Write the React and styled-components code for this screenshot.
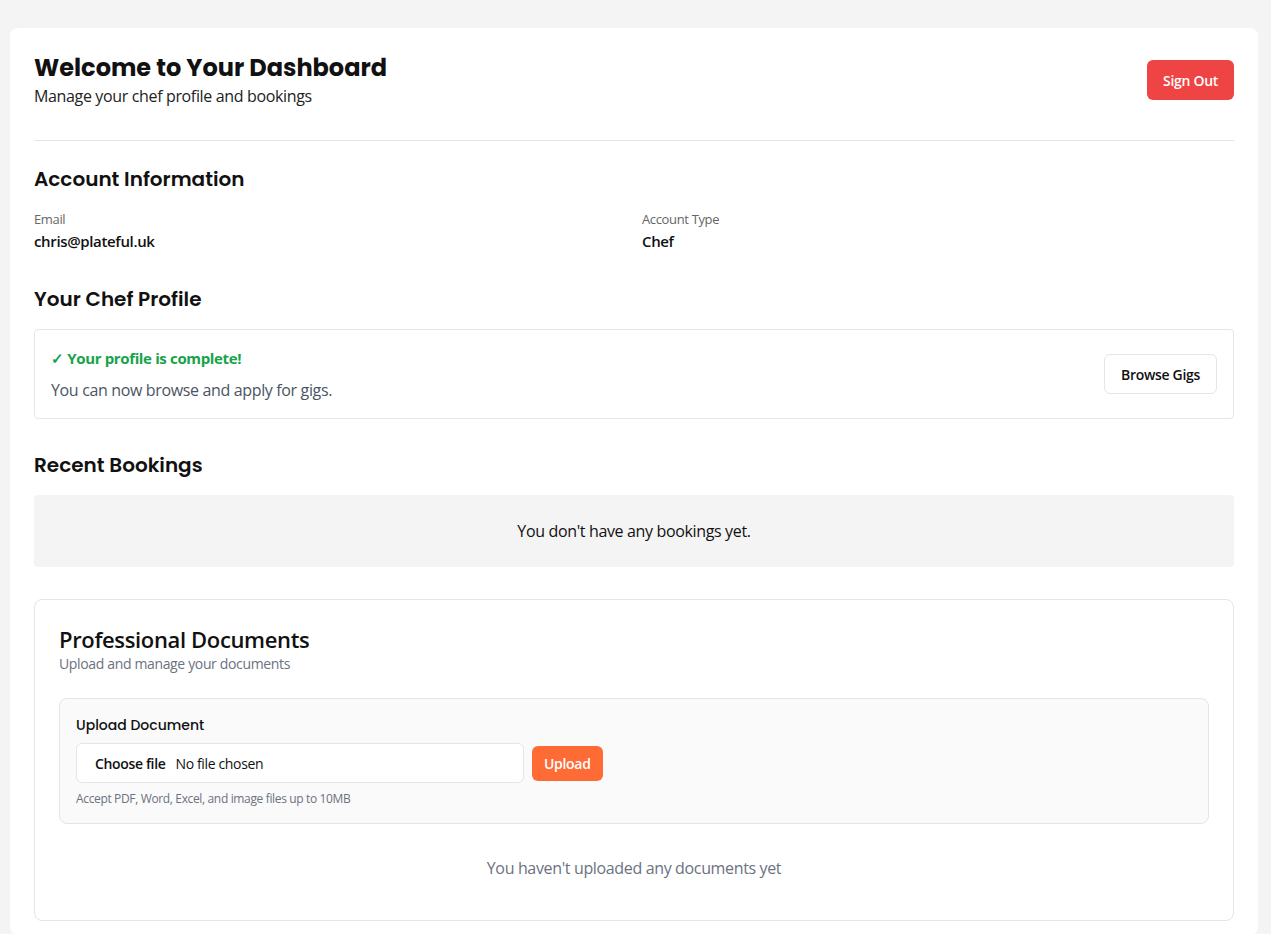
import React from "react";
import styled, { createGlobalStyle } from "styled-components";

const GlobalStyle = createGlobalStyle`
  * { box-sizing: border-box; }
  body {
    margin: 0;
    background: #f4f4f4;
    font-family: "Segoe UI", "Open Sans", sans-serif;
    letter-spacing: -0.022em;
    color: #111;
  }
`;

const heading = `"Poppins", Inter, sans-serif`;

const Page = styled.div`
  padding: 28px 13px 0 10px;
`;

const Card = styled.div`
  background: #fff;
  border-radius: 8px;
  padding: 24px 24px 14px;
`;

const Header = styled.div`
  display: flex;
  align-items: center;
  justify-content: space-between;
  padding-bottom: 32px;
  border-bottom: 1px solid #e5e5e5;
`;

const Title = styled.h1`
  margin: 0;
  font-family: ${heading};
  letter-spacing: 0;
  font-size: 24px;
  line-height: 32px;
  font-weight: 700;
  color: #111;
`;

const Subtitle = styled.p`
  margin: 0;
  font-size: 16px;
  line-height: 24px;
  color: #222;
`;

const Button = styled.button`
  font-family: "Segoe UI", "Open Sans", sans-serif;
  letter-spacing: -0.022em;
  font-size: 14px;
  font-weight: 600;
  border-radius: 6px;
  cursor: pointer;
  height: ${(p) => p.$h || 40}px;
  padding: 0 ${(p) => p.$px || 16}px;
  background: ${(p) => p.$bg || "#fff"};
  color: ${(p) => p.$color || "#111"};
  border: 1px solid ${(p) => p.$border || "transparent"};
`;

const SectionTitle = styled.h2`
  margin: ${(p) => p.$mt || 32}px 0 16px;
  font-family: ${heading};
  letter-spacing: 0;
  font-size: 20px;
  line-height: 28px;
  font-weight: 600;
  color: #111;
`;

const InfoGrid = styled.div`
  display: grid;
  grid-template-columns: 1fr 1fr;
  gap: 16px;
`;

const Label = styled.div`
  font-size: 13px;
  line-height: 20px;
  color: #666;
`;

const Value = styled.div`
  font-size: 15px;
  line-height: 24px;
  font-weight: 600;
  color: #111;
`;

const ProfileBox = styled.div`
  display: flex;
  align-items: center;
  justify-content: space-between;
  border: 1px solid #e5e5e5;
  border-radius: 4px;
  padding: 16px;
`;

const Success = styled.div`
  font-size: 15px;
  line-height: 24px;
  font-weight: 700;
  color: #16a34a;
  margin-bottom: 8px;
`;

const Muted = styled.div`
  font-size: 16px;
  line-height: 24px;
  color: #4b5563;
`;

const EmptyBox = styled.div`
  background: #f4f4f4;
  border-radius: 4px;
  padding: 24px;
  text-align: center;
  font-size: 16px;
  line-height: 24px;
  color: #111;
`;

const DocCard = styled.div`
  margin-top: 32px;
  border: 1px solid #e5e5e5;
  border-radius: 8px;
  padding: 24px;
`;

const DocTitle = styled.h3`
  margin: 0;
  font-size: 22px;
  line-height: 30px;
  font-weight: 600;
  color: #111;
`;

const DocSub = styled.p`
  margin: 0 0 24px;
  font-size: 14px;
  line-height: 20px;
  color: #6b7280;
`;

const UploadBox = styled.div`
  background: #fafafa;
  border: 1px solid #e5e5e5;
  border-radius: 8px;
  padding: 16px;
`;

const UploadLabel = styled.div`
  font-family: ${heading};
  letter-spacing: 0;
  font-size: 14px;
  line-height: 20px;
  font-weight: 500;
  color: #111;
  margin-bottom: 8px;
`;

const UploadRow = styled.div`
  display: flex;
  align-items: center;
  gap: 8px;
`;

const FileInput = styled.div`
  width: 448px;
  height: 40px;
  background: #fff;
  border: 1px solid #e5e5e5;
  border-radius: 6px;
  display: flex;
  align-items: center;
  padding-left: 18px;
  font-size: 14px;
  color: #111;
`;

const ChooseFile = styled.span`
  font-weight: 600;
  margin-right: 10px;
`;

const Hint = styled.div`
  margin-top: 8px;
  font-size: 12px;
  line-height: 16px;
  color: #6b7280;
`;

const NoDocs = styled.div`
  padding: 32px 0 16px;
  text-align: center;
  font-size: 16px;
  line-height: 24px;
  color: #6b7280;
`;

export default function App() {
  return (
    <Page>
      <GlobalStyle />
      <Card>
        <Header>
          <div>
            <Title>Welcome to Your Dashboard</Title>
            <Subtitle>Manage your chef profile and bookings</Subtitle>
          </div>
          <Button $bg="#ef4444" $color="#fff" $px={15}>
            Sign Out
          </Button>
        </Header>

        <SectionTitle $mt={24}>Account Information</SectionTitle>
        <InfoGrid>
          <div>
            <Label>Email</Label>
            <Value>chris@plateful.uk</Value>
          </div>
          <div>
            <Label>Account Type</Label>
            <Value>Chef</Value>
          </div>
        </InfoGrid>

        <SectionTitle>Your Chef Profile</SectionTitle>
        <ProfileBox>
          <div>
            <Success>✓ Your profile is complete!</Success>
            <Muted>You can now browse and apply for gigs.</Muted>
          </div>
          <Button $border="#e5e5e5">Browse Gigs</Button>
        </ProfileBox>

        <SectionTitle>Recent Bookings</SectionTitle>
        <EmptyBox>You don't have any bookings yet.</EmptyBox>

        <DocCard>
          <DocTitle>Professional Documents</DocTitle>
          <DocSub>Upload and manage your documents</DocSub>
          <UploadBox>
            <UploadLabel>Upload Document</UploadLabel>
            <UploadRow>
              <FileInput>
                <ChooseFile>Choose file</ChooseFile>
                <span>No file chosen</span>
              </FileInput>
              <Button $bg="#ff6b35" $color="#fff" $h={35} $px={11}>
                Upload
              </Button>
            </UploadRow>
            <Hint>Accept PDF, Word, Excel, and image files up to 10MB</Hint>
          </UploadBox>
          <NoDocs>You haven't uploaded any documents yet</NoDocs>
        </DocCard>
      </Card>
    </Page>
  );
}
